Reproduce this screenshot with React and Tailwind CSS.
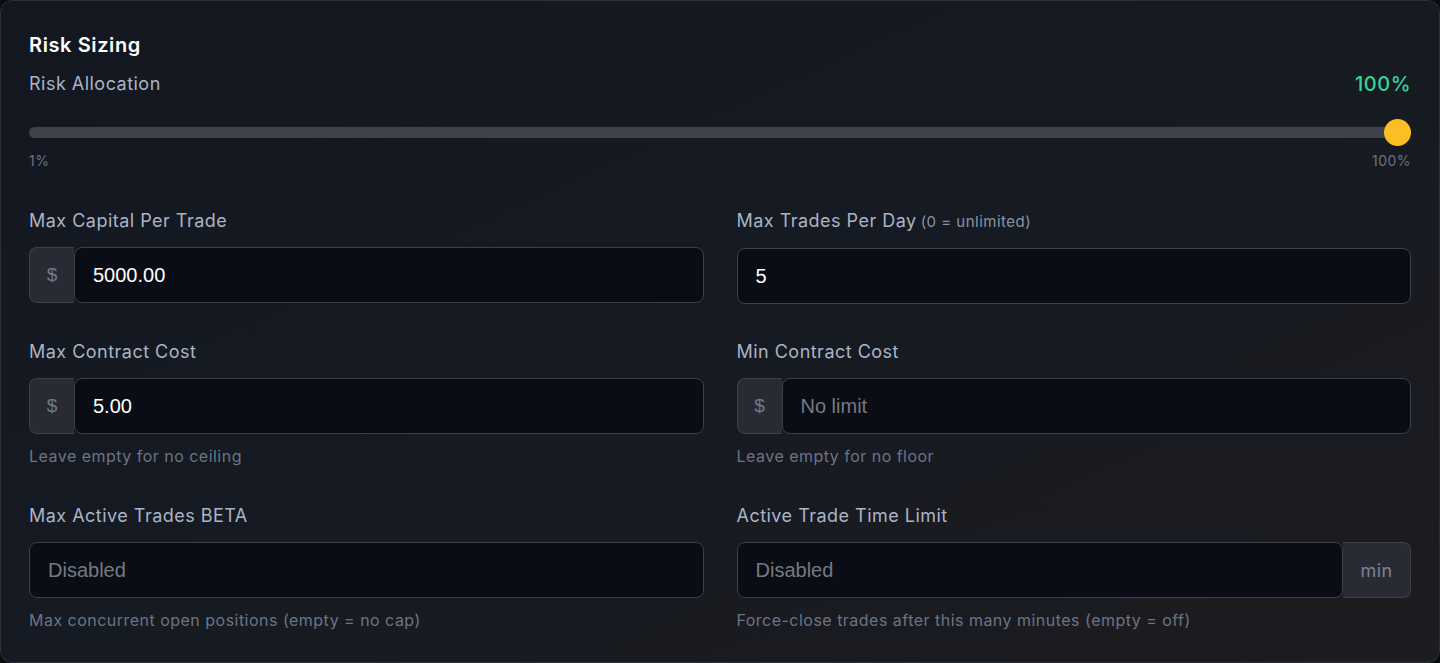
import React, { useState } from "react";

const labelFont = { fontFamily: "Inter, 'Noto Sans', sans-serif" };

function Field({ label, note, hint, children }) {
  return (
    <div>
      <label className="block text-[18px] leading-[24px] text-[#aab4c6]">
        {label}
        {note && <span className="ml-1 text-[15px] text-[#8b93a3]">{note}</span>}
      </label>
      <div className="mt-[14px] flex h-[56px]">{children}</div>
      {hint && (
        <p className="mt-[10px] text-[16px] leading-[24px] text-[#6b7486]">{hint}</p>
      )}
    </div>
  );
}

function Prefix({ children }) {
  return (
    <span className="flex w-[45px] shrink-0 items-center justify-center rounded-l-lg border border-r-0 border-[#3b404b] bg-[#282b33] text-[19px] tracking-normal text-[#6f7b92] [font-family:'Liberation_Sans',Arial,sans-serif]">
      {children}
    </span>
  );
}

function TextInput({ value, placeholder }) {
  const [v, setV] = useState(value || "");
  return (
    <input
      type="text"
      value={v}
      placeholder={placeholder}
      onChange={(e) => setV(e.target.value)}
      className="h-full w-full min-w-0 rounded-lg border border-[#3b404b] bg-[#0a0d15] px-[18px] text-[20px] tracking-normal text-white placeholder-[#767a80] outline-none [font-family:'Liberation_Sans',Arial,sans-serif]"
    />
  );
}

export default function App() {
  const [risk, setRisk] = useState(100);

  return (
    <div className="min-h-screen bg-[#0b0c10] tracking-[0.03em]" style={labelFont}>
      <div className="h-[663px] rounded-xl border border-[#2b2f38] bg-gradient-to-br from-[#131720] via-[#161a22] to-[#1d1c1f] px-[28px] pt-[30px]">
        <h2 className="text-[20px] leading-[28px] font-semibold tracking-[0.03em] text-white">Risk Sizing</h2>

        {/* Allocation slider */}
        <div className="mt-[13px] flex items-center justify-between">
          <span className="text-[18px] leading-[24px] text-[#aab4c6]">Risk Allocation</span>
          <span className="text-[20px] leading-[24px] font-medium text-[#34d399]">{risk}%</span>
        </div>
        <div className="relative mt-[23px] h-[27px]">
          <div className="absolute top-[8px] left-0 right-0 h-[11px] rounded-full bg-[#3e424b]" />
          <div
            className="absolute top-0 h-[27px] w-[27px] -translate-x-full rounded-full bg-[#fbbf24]"
            style={{ left: `${risk}%` }}
          />
        </div>
        <div className="mt-[5px] flex justify-between text-[14px] leading-[20px] text-[#6b7280]">
          <span>1%</span>
          <span>100%</span>
        </div>

        <div className="mt-[38px] grid grid-cols-2 gap-x-[33px]">
          <Field label="Max Capital Per Trade">
            <Prefix>$</Prefix>
            <TextInput value="5000.00" />
          </Field>
          <Field label="Max Trades Per Day" note="(0 = unlimited)">
            <TextInput value="5" />
          </Field>
        </div>

        <div className="mt-[36px] grid grid-cols-2 gap-x-[33px]">
          <Field label="Max Contract Cost" hint="Leave empty for no ceiling">
            <Prefix>$</Prefix>
            <TextInput value="5.00" />
          </Field>
          <Field label="Min Contract Cost" hint="Leave empty for no floor">
            <Prefix>$</Prefix>
            <TextInput placeholder="No limit" />
          </Field>
        </div>

        <div className="mt-[36px] grid grid-cols-2 gap-x-[33px]">
          <Field label="Max Active Trades BETA" hint="Max concurrent open positions (empty = no cap)">
            <TextInput placeholder="Disabled" />
          </Field>
          <Field
            label="Active Trade Time Limit"
            hint="Force-close trades after this many minutes (empty = off)"
          >
            <TextInput placeholder="Disabled" />
            <span className="flex w-[68px] shrink-0 items-center justify-center rounded-r-lg border border-l-0 border-[#3b404b] bg-[#282b33] text-[18px] text-[#7a8396]">
              min
            </span>
          </Field>
        </div>
      </div>
    </div>
  );
}
